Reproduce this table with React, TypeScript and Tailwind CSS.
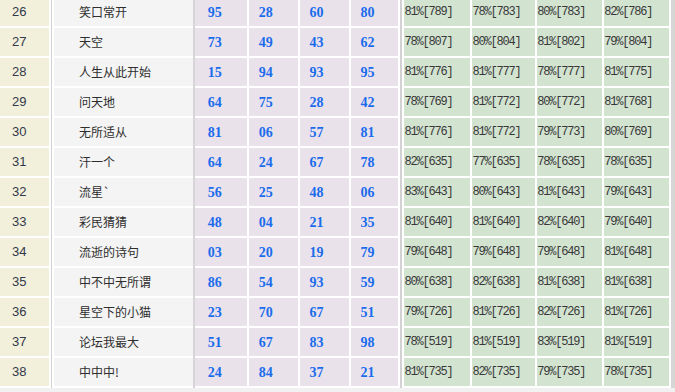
const rows: [string, string, string[], string[]][] = [
  ["26", "笑口常开", ["95", "28", "60", "80"], ["81%[789]", "78%[783]", "80%[783]", "82%[786]"]],
  ["27", "天空", ["73", "49", "43", "62"], ["78%[807]", "80%[804]", "81%[802]", "79%[804]"]],
  ["28", "人生从此开始", ["15", "94", "93", "95"], ["81%[776]", "81%[777]", "78%[777]", "81%[775]"]],
  ["29", "问天地", ["64", "75", "28", "42"], ["78%[769]", "81%[772]", "80%[772]", "81%[768]"]],
  ["30", "无所适从", ["81", "06", "57", "81"], ["81%[776]", "81%[772]", "79%[773]", "80%[769]"]],
  ["31", "汗一个", ["64", "24", "67", "78"], ["82%[635]", "77%[635]", "78%[635]", "78%[635]"]],
  ["32", "流星`", ["56", "25", "48", "06"], ["83%[643]", "80%[643]", "81%[643]", "79%[643]"]],
  ["33", "彩民猜猜", ["48", "04", "21", "35"], ["81%[640]", "81%[640]", "82%[640]", "79%[640]"]],
  ["34", "流逝的诗句", ["03", "20", "19", "79"], ["79%[648]", "79%[648]", "79%[648]", "81%[648]"]],
  ["35", "中不中无所谓", ["86", "54", "93", "59"], ["80%[638]", "82%[638]", "81%[638]", "81%[638]"]],
  ["36", "星空下的小猫", ["23", "70", "67", "51"], ["79%[726]", "81%[726]", "82%[726]", "81%[726]"]],
  ["37", "论坛我最大", ["51", "67", "83", "98"], ["78%[519]", "81%[519]", "83%[519]", "81%[519]"]],
  ["38", "中中中!", ["24", "84", "37", "21"], ["81%[735]", "82%[735]", "79%[735]", "78%[735]"]],
]

const pinkCols = [
  { w: "w-[52px]", pl: "pl-[13px]", mr: "mr-[2px]" },
  { w: "w-[49px]", pl: "pl-[10px]", mr: "mr-[2px]" },
  { w: "w-[49px]", pl: "pl-[10px]", mr: "mr-[2px]" },
  { w: "w-[48px]", pl: "pl-[10px]", mr: "mr-[2px]" },
]

const greenCols = [
  { w: "w-[66px]", mr: "mr-[2px]" },
  { w: "w-[63px]", mr: "mr-[2px]" },
  { w: "w-[65px]", mr: "mr-[2px]" },
  { w: "w-[65px]", mr: "mr-[2px]" },
]

export default function App() {
  return (
    <div className="w-[675px] h-[392px] overflow-hidden bg-white flex flex-col">
      <div className="-mt-[2px]">
        {rows.map(([no, name, nums, rates]) => (
          <div key={no} className="flex h-[30px] items-start">
            <div className="w-[49px] h-[28px] bg-[#f2f0db] pl-[12px] flex items-center text-[13px] text-[#33384a] font-['Liberation_Sans',sans-serif]">
              {no}
            </div>
            <div className="w-[2px]" />
            <div className="w-[1px] self-stretch bg-[#d2d2d2]" />
            <div className="w-[2px]" />
            <div className="w-[139px] h-[28px] bg-[#f4f4f4] pl-[25px] flex items-center text-[12px] text-[#2e2e2e] font-['Noto_Sans_CJK_SC',sans-serif]">
              {name}
            </div>
            <div className="w-[2px] self-stretch bg-[#d6d6d6]" />
            {nums.map((n, i) => (
              <div
                key={i}
                className={`${pinkCols[i].w} ${pinkCols[i].pl} ${pinkCols[i].mr} h-[28px] bg-[#eae2ea] flex items-center text-[14px] font-bold text-[#1a6cec] font-['Liberation_Serif',serif]`}
              >
                {n}
              </div>
            ))}
            <div className="w-[2px] self-stretch bg-[#d2d2d2]" />
            <div className="w-[2px]" />
            {rates.map((r, i) => (
              <div
                key={i}
                className={`${greenCols[i].w} ${greenCols[i].mr} h-[28px] bg-[#d2e3d0] flex items-center text-[12px] tracking-[-1.2px] text-[#383838] font-['Liberation_Mono',monospace]`}
              >
                {r}
              </div>
            ))}
            <div className="w-[4px] self-stretch bg-[#d6d6d6]" />
          </div>
        ))}
      </div>
      <div className="flex-1 bg-[#f1f1f1]" />
    </div>
  )
}
